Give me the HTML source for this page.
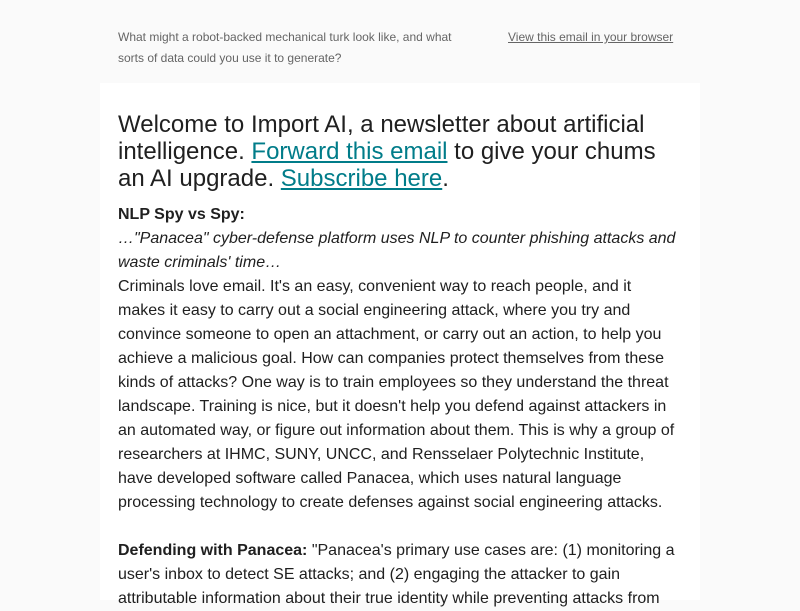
<!DOCTYPE html>
<html><head><meta charset="utf-8"><style>
html,body{margin:0;height:600px;overflow:hidden;}
body{background:#fafafa;font-family:"Liberation Sans",Arial,sans-serif;}
.pre{position:absolute;left:118px;top:27px;width:350px;font-size:12px;line-height:21px;color:#656565;}
.view{position:absolute;left:508px;top:27px;font-size:12px;line-height:21px;color:#656565;text-decoration:underline;}
.card{position:absolute;left:100px;top:83px;width:600px;height:517px;background:#fff;}
.h{position:absolute;left:118px;top:111px;font-size:24px;line-height:27px;color:#202020;white-space:nowrap;}
.h a{color:#007c89;text-decoration:underline;}
.b{position:absolute;left:118px;top:203px;font-size:16px;line-height:24px;color:#202020;white-space:nowrap;}
</style></head><body>
<div class="pre">What might a robot-backed mechanical turk look like, and what sorts of data could you use it to generate?</div>
<div class="view">View this email in your browser</div>
<div class="card"></div>
<div class="h">Welcome to Import AI, a newsletter about artificial<br>intelligence. <a>Forward this email</a> to give your chums<br>an AI upgrade. <a>Subscribe here</a>.</div>
<div class="b"><b>NLP Spy vs Spy:</b><br><i>…"Panacea" cyber-defense platform uses NLP to counter phishing attacks and<br>waste criminals' time…</i><br>Criminals love email. It's an easy, convenient way to reach people, and it<br>makes it easy to carry out a social engineering attack, where you try and<br>convince someone to open an attachment, or carry out an action, to help you<br>achieve a malicious goal. How can companies protect themselves from these<br>kinds of attacks? One way is to train employees so they understand the threat<br>landscape. Training is nice, but it doesn't help you defend against attackers in<br>an automated way, or figure out information about them. This is why a group of<br>researchers at IHMC, SUNY, UNCC, and Rensselaer Polytechnic Institute,<br>have developed software called Panacea, which uses natural language<br>processing technology to create defenses against social engineering attacks.<br><br><b>Defending with Panacea:</b> "Panacea's primary use cases are: (1) monitoring a<br>user's inbox to detect SE attacks; and (2) engaging the attacker to gain<br>attributable information about their true identity while preventing attacks from</div>
</body></html>
